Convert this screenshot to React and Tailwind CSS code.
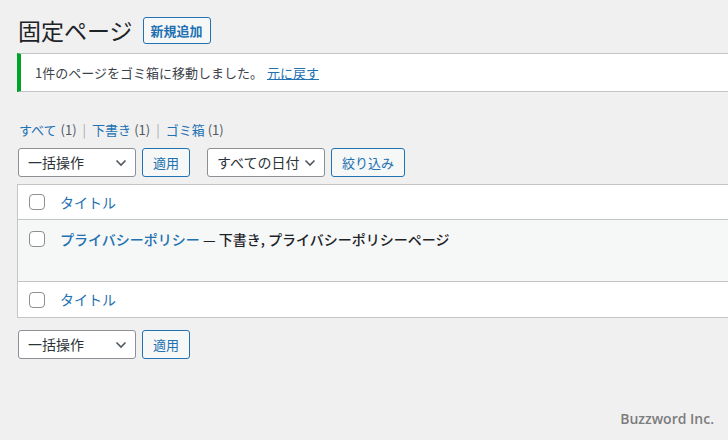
import React from "react";

const jp = { fontFamily: '"Noto Sans CJK JP", "Noto Sans", sans-serif' };

function Chevron() {
  return (
    <svg className="h-[10px] w-[12px]" viewBox="0 0 12 8" fill="none">
      <path d="M1.5 1.5L6 6l4.5-4.5" stroke="#50575e" strokeWidth="1.6" />
    </svg>
  );
}

function Select({ label, width }) {
  return (
    <div
      className={`flex h-[29px] items-center justify-between rounded-[3px] border border-[#8c8f94] bg-white pl-[9px] pr-[8px] text-[14px] text-[#2c3338] ${width}`}
    >
      <span>{label}</span>
      <Chevron />
    </div>
  );
}

function Button({ label, width }) {
  return (
    <div
      className={`flex h-[29px] items-center justify-center rounded-[3px] border border-[#2271b1] bg-[#f6f7f7] text-[13px] text-[#2271b1] ${width}`}
    >
      {label}
    </div>
  );
}

function Checkbox() {
  return <div className="h-[16px] w-[16px] rounded-[4px] border border-[#8c8f94] bg-white" />;
}

export default function App() {
  return (
    <div className="relative min-h-[440px] w-[728px] overflow-hidden bg-[#f0f0f1] text-[#3c434a]" style={jp}>
      <div className="pl-[18px] pt-[16px]">
        {/* 見出し */}
        <div className="flex h-[29px] items-center gap-[10px]">
          <h1 className="text-[23px] leading-[29px] text-[#1d2327]">固定ページ</h1>
          <div className="flex h-[27px] items-center rounded-[3px] border border-[#2271b1] bg-[#f6f7f7] px-[7px] text-[13px] font-semibold text-[#2271b1]">
            新規追加
          </div>
        </div>

        {/* 通知 */}
        <div className="-ml-[1px] mt-[8px] flex h-[39px] items-center border-y border-[#c3c4c7] border-l-4 border-l-[#00a32a] bg-white pl-[14px] text-[13px] text-[#3c434a]">
          <span>1件のページをゴミ箱に移動しました。</span>
          <span className="ml-[4px] text-[#2271b1] underline">元に戻す</span>
        </div>

        {/* フィルタ */}
        <div className="ml-[1px] mt-[28px] flex h-[20px] items-center text-[13px] leading-[20px]">
          <span className="text-[#2271b1]">すべて</span>
          <span className="ml-[4px] text-[#50575e]">(1)</span>
          <span className="mx-[6px] text-[#a7aaad]">|</span>
          <span className="text-[#2271b1]">下書き</span>
          <span className="ml-[3px] text-[#50575e]">(1)</span>
          <span className="mx-[6px] text-[#a7aaad]">|</span>
          <span className="text-[#2271b1]">ゴミ箱</span>
          <span className="ml-[3px] text-[#50575e]">(1)</span>
        </div>

        <div className="mt-[8px] flex items-center">
          <Select label="一括操作" width="w-[118px]" />
          <div className="ml-[6px]">
            <Button label="適用" width="w-[48px]" />
          </div>
          <div className="ml-[17px]">
            <Select label="すべての日付" width="w-[118px]" />
          </div>
          <div className="ml-[6px]">
            <Button label="絞り込み" width="w-[74px]" />
          </div>
        </div>

        {/* テーブル */}
        <div className="-ml-[1px] mt-[7px] border border-r-0 border-[#c3c4c7] bg-white">
          <div className="flex h-[35px] items-center border-b border-[#c3c4c7] pl-[11px]">
            <Checkbox />
            <span className="ml-[15px] text-[14px] text-[#2271b1]">タイトル</span>
          </div>
          <div className="flex h-[62px] items-start border-b border-[#c3c4c7] bg-[#f6f7f7] pl-[11px] pt-[11px]">
            <Checkbox />
            <span className="-mt-[2px] ml-[15px] text-[14px] font-medium leading-[20px]">
              <span className="text-[#2271b1]">プライバシーポリシー</span>
              <span className="text-[#1d2327]"> — 下書き, プライバシーポリシーページ</span>
            </span>
          </div>
          <div className="flex h-[35px] items-center pl-[11px]">
            <Checkbox />
            <span className="ml-[15px] text-[14px] text-[#2271b1]">タイトル</span>
          </div>
        </div>

        <div className="mt-[12px] flex items-center">
          <Select label="一括操作" width="w-[118px]" />
          <div className="ml-[6px]">
            <Button label="適用" width="w-[48px]" />
          </div>
        </div>
      </div>

      <div
        className="absolute bottom-[11px] right-[14px] text-[14px] font-semibold text-[#7c7c7c]"
        style={{ fontFamily: '"Open Sans", "Noto Sans", sans-serif' }}
      >
        Buzzword Inc.
      </div>
    </div>
  );
}
